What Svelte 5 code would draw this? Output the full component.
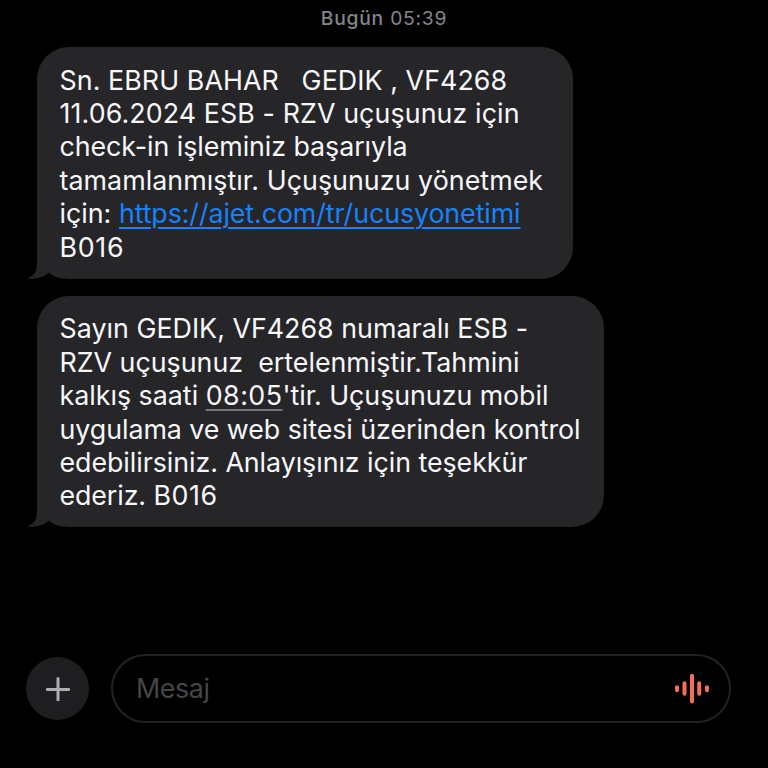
<script lang="ts">
  type Part = { text: string; spacing?: number; kind?: "link" | "time" };

  // letter spacing (px) is set per part so the lines keep their widths
  const messages: { width: number; lines: Part[][] }[] = [
    {
      width: 536,
      lines: [
        [{ text: "Sn. EBRU BAHAR   GEDIK , VF4268", spacing: 0.07 }],
        [{ text: "11.06.2024 ESB - RZV uçuşunuz için", spacing: 0.1 }],
        [{ text: "check-in işleminiz başarıyla", spacing: -0.06 }],
        [{ text: "tamamlanmıştır. Uçuşunuzu yönetmek", spacing: 0.05 }],
        [
          { text: "için: " },
          { text: "https://ajet.com/tr/ucusyonetimi", spacing: -0.09, kind: "link" },
        ],
        [{ text: "B016", spacing: 0.7 }],
      ],
    },
    {
      width: 567,
      lines: [
        [{ text: "Sayın GEDIK, VF4268 numaralı ESB -", spacing: 0.02 }],
        [{ text: "RZV uçuşunuz  ertelenmiştir.Tahmini" }],
        [
          { text: "kalkış saati " },
          { text: "08:05", spacing: 0.5, kind: "time" },
          { text: "'tir. Uçuşunuzu mobil", spacing: -0.05 },
        ],
        [{ text: "uygulama ve web sitesi üzerinden kontrol", spacing: -0.05 }],
        [{ text: "edebilirsiniz. Anlayışınız için teşekkür", spacing: -0.05 }],
        [{ text: "ederiz. " , spacing: -0.1 }, { text: "B016", spacing: 0.6 }],
      ],
    },
  ];
</script>

<div class="screen">
  <p class="date"><span class="day">Bugün</span> 05:39</p>

  <!---------- messages --------->
  <div class="messages">
    {#each messages as message}
      <div class="bubble" style="width: {message.width}px">
        {#each message.lines as line}
          <p class="line">{#each line as part}<span class={part.kind} style="letter-spacing: {part.spacing ?? 0}px">{part.text}</span>{/each}</p>
        {/each}
        <svg class="tail" viewBox="0 0 36 34">
          <path d="M10 0V17C10 24 7.5 29 0 31.3C8 33 16.5 30.5 22 25.8C26 29 31 31.3 36 31.8V0Z" />
        </svg>
      </div>
    {/each}
  </div>

  <!---------- composer --------->
  <div class="composer">
    <button class="plus" aria-label="Ekle">
      <svg viewBox="0 0 24 24">
        <path d="M12 1.5V23.5M1.2 12.5H22.8" />
      </svg>
    </button>
    <div class="field">
      <span class="placeholder">Mesaj</span>
      <svg class="wave" viewBox="0 0 36 32">
        <path d="M3 14.2V17.3M10.5 10.3V20.8M18 2.8V28.5M25.2 10.3V20.8M33 14.2V17.3" />
      </svg>
    </div>
  </div>
</div>

<style>
  :global(body) {
    margin: 0;
    background: #000;
  }

  .screen {
    display: flex;
    flex-direction: column;
    width: 768px;
    height: 768px;
    overflow: hidden;
    background: #000;
    font-family: Inter, "Liberation Sans", sans-serif;
  }

  .date {
    margin: 6px 0 0;
    height: 24px;
    line-height: 24px;
    font-size: 19.3px;
    letter-spacing: 0.75px;
    text-align: center;
    color: #85858a;
  }

  .day {
    font-weight: 500;
  }

  /* ------ messages ----- */
  .messages {
    display: flex;
    flex-direction: column;
    gap: 17px;
    margin: 17px 0 0 37px;
  }

  .bubble {
    position: relative;
    isolation: isolate;
    box-sizing: border-box;
    height: 231.7px;
    padding: 16.8px 0 0 22.5px;
    border-radius: 32px;
    background: #262629;
  }

  .line {
    margin: 0;
    height: 33.35px;
    line-height: 33.35px;
    font-size: 26.8px;
    white-space: pre;
    color: #f7f7fa;
  }

  .link {
    color: #1682fb;
    text-decoration: underline;
    text-decoration-thickness: 2px;
    text-underline-offset: 3.5px;
  }

  .time {
    text-decoration: underline;
    text-decoration-color: #77777b;
    text-decoration-thickness: 2px;
    text-underline-offset: 3.5px;
  }

  .tail {
    position: absolute;
    left: -10px;
    bottom: -2px;
    width: 36px;
    height: 34px;
    z-index: -1;
  }

  .tail path {
    fill: #262629;
  }

  /* ------ composer ----- */
  .composer {
    display: flex;
    align-items: center;
    gap: 22px;
    margin: auto 37px 45px 26px;
  }

  .plus {
    display: grid;
    place-items: center;
    width: 63px;
    height: 63px;
    padding: 0;
    border: 0;
    border-radius: 50%;
    background: #1e1e20;
  }

  .plus svg {
    width: 24px;
    height: 24px;
    fill: none;
    stroke: #aeaeb0;
    stroke-width: 3;
    stroke-linecap: round;
  }

  .field {
    display: flex;
    flex: 1;
    align-items: center;
    justify-content: space-between;
    box-sizing: border-box;
    height: 69px;
    padding: 0 19px 0 23px;
    border: 2px solid #222224;
    border-radius: 35px;
  }

  .placeholder {
    padding-bottom: 2px;
    font-size: 26.8px;
    letter-spacing: -0.4px;
    color: #464649;
  }

  .wave {
    width: 36px;
    height: 32px;
    fill: none;
    stroke: #f86c5c;
    stroke-width: 4;
    stroke-linecap: round;
  }
</style>
